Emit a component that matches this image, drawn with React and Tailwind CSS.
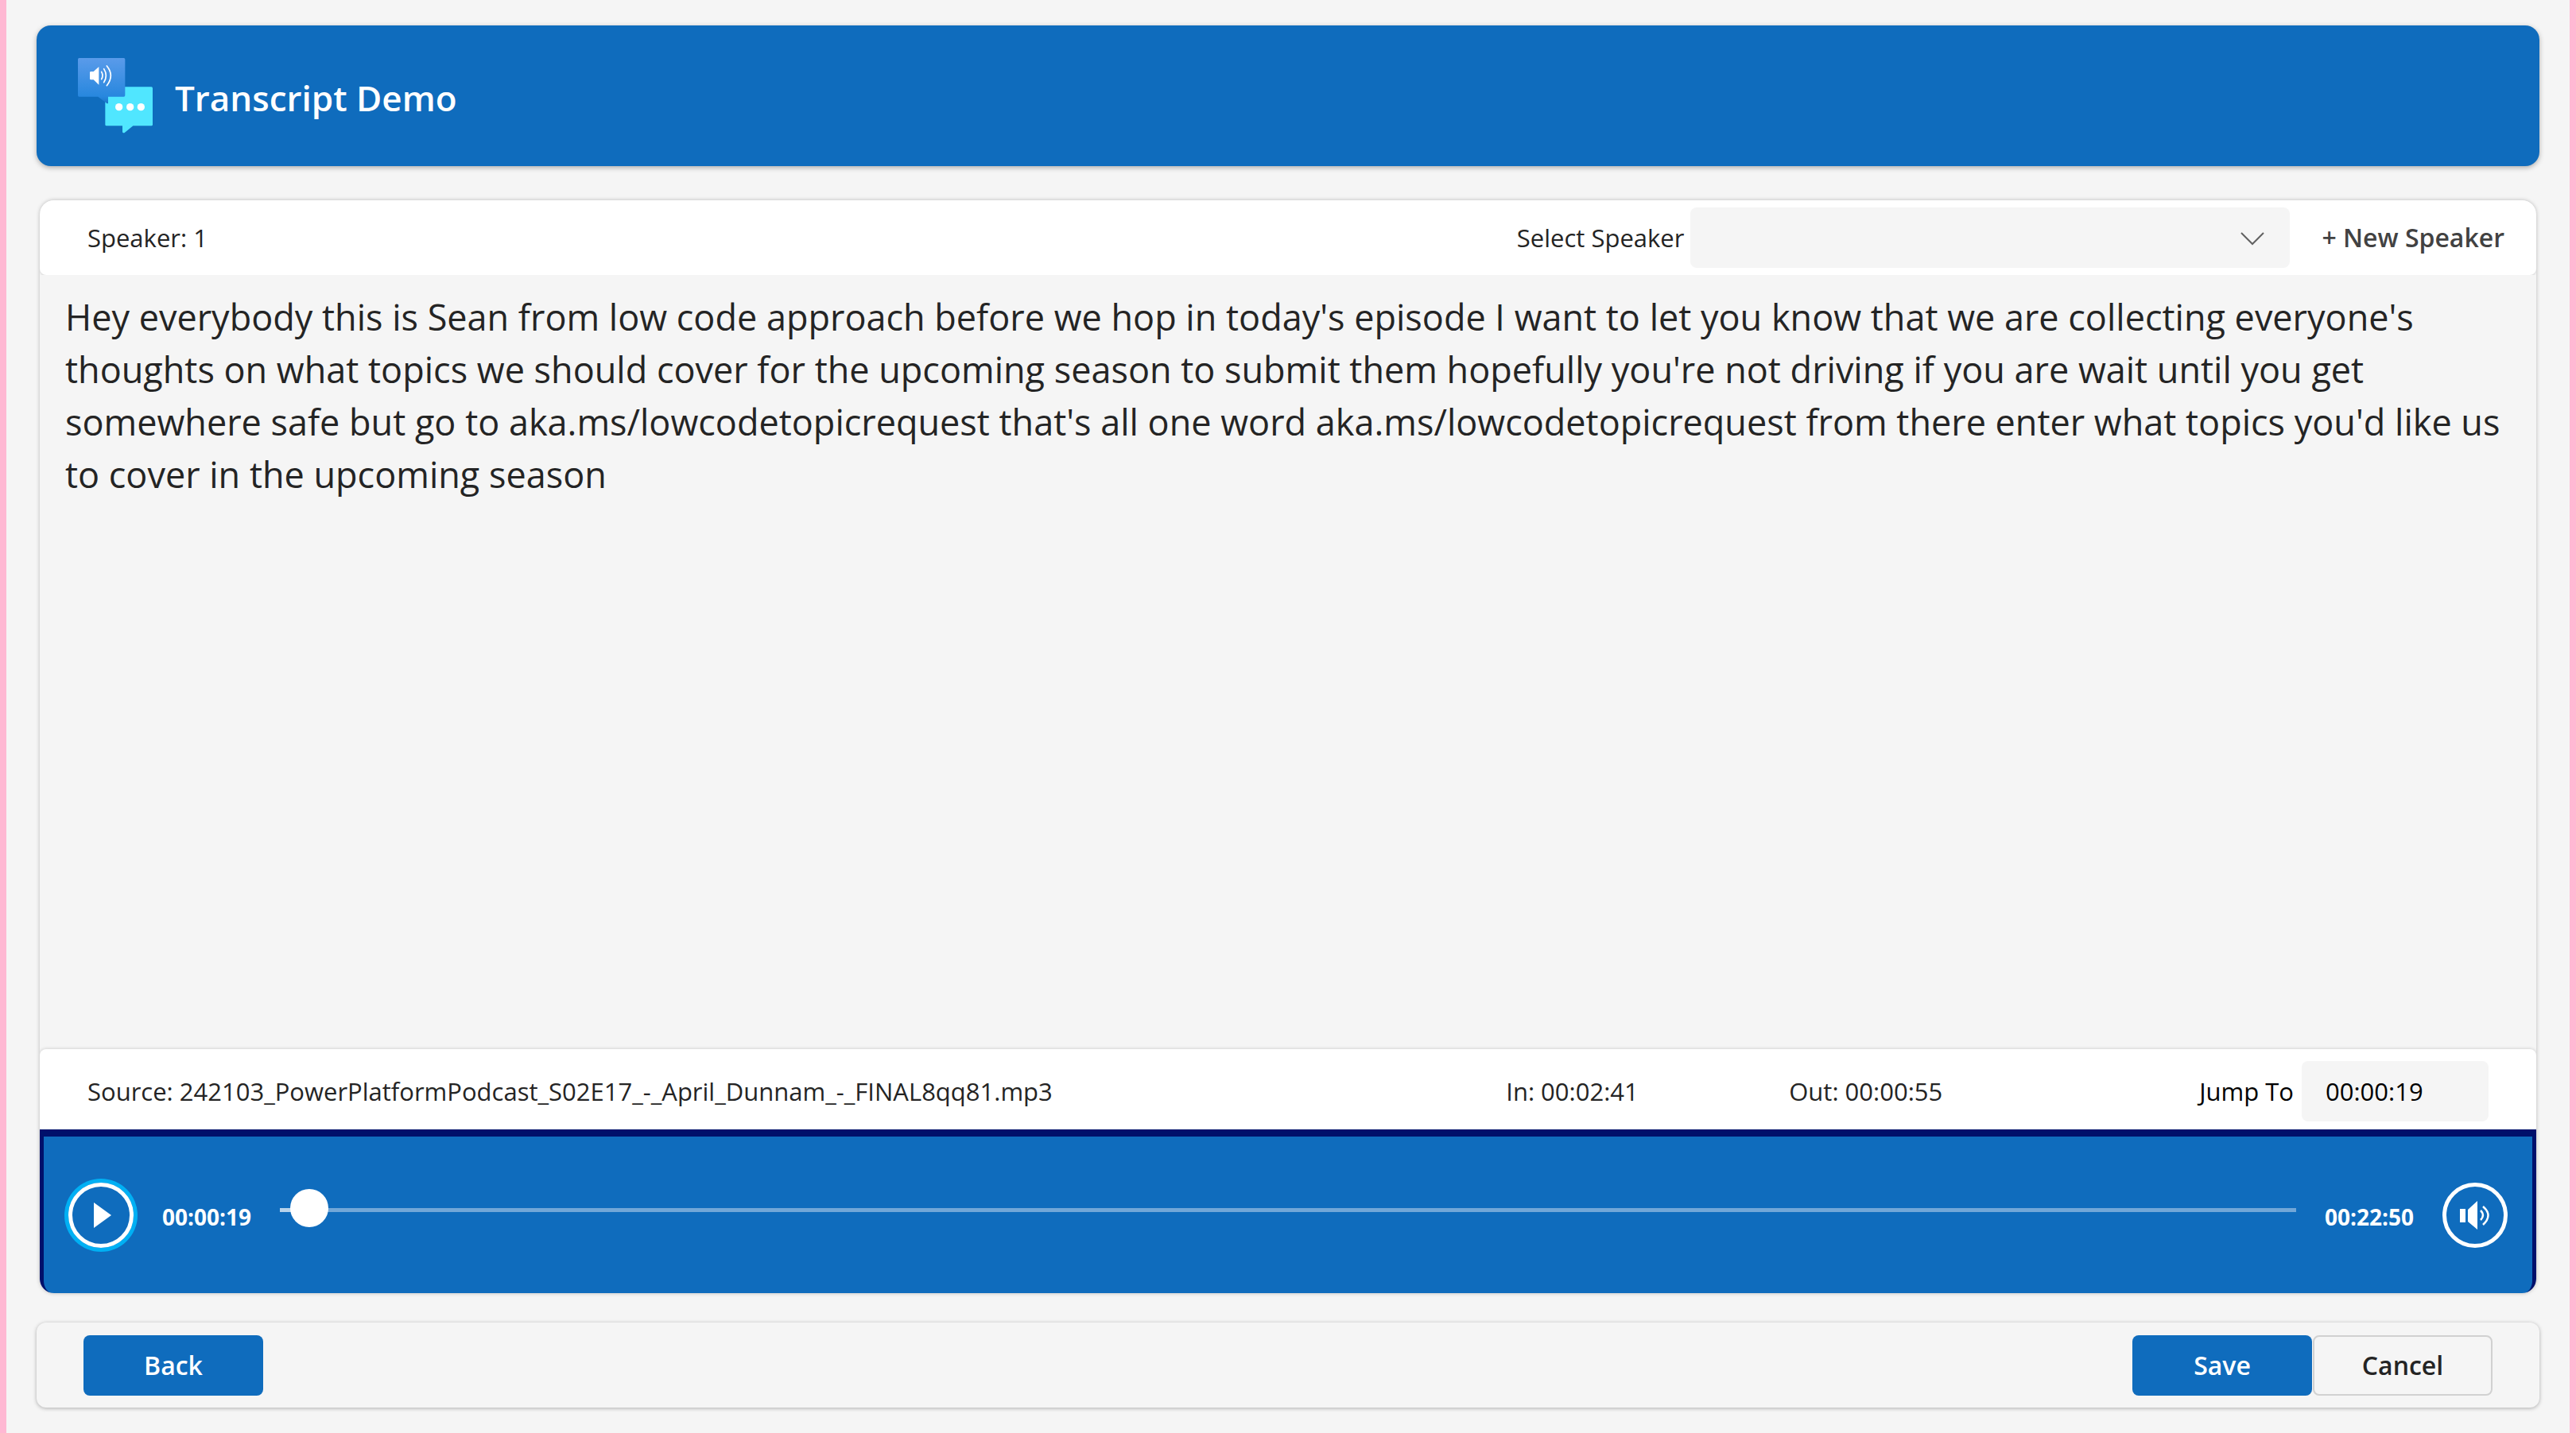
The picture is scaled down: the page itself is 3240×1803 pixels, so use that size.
import { useState } from "react";

const DURATION = 1370;

const TRANSCRIPT =
  "Hey everybody this is Sean from low code approach before we hop in today's episode I want to let you know that we are collecting everyone's thoughts on what topics we should cover for the upcoming season to submit them hopefully you're not driving if you are wait until you get somewhere safe but go to aka.ms/lowcodetopicrequest that's all one word aka.ms/lowcodetopicrequest from there enter what topics you'd like us to cover in the upcoming season";

function Logo() {
  return (
    <svg viewBox="54 41 282 285" className="h-[95px] w-[94px] shrink-0" aria-hidden="true">
      <defs>
        <linearGradient id="bubble" x1="0" y1="0" x2="0" y2="1">
          <stop offset="0" stopColor="#5a9bea" />
          <stop offset="0.85" stopColor="#2787de" />
          <stop offset="1" stopColor="#1a72c6" />
        </linearGradient>
      </defs>
      <path d="M162 150H331a5 5 0 0 1 5 5V292a5 5 0 0 1-5 5H262L230 323a5 5 0 0 1-8-3V297H162a5 5 0 0 1-5-5V155a5 5 0 0 1 5-5Z" fill="#50e6ff" />
      <path d="M59 41H227a5 5 0 0 1 5 5V182a5 5 0 0 1-5 5H168V209a3 3 0 0 1-5 3L130 187H59a5 5 0 0 1-5-5V46a5 5 0 0 1 5-5Z" fill="url(#bubble)" />
      <path d="M99 96a4 4 0 0 1 4-4H113L133 74V142L113 123H103a4 4 0 0 1-4-4Z" fill="#fff" />
      <path d="M143 93Q151 107 143 121M152 82Q168 107 152 133M163 71Q193 107 163 145" fill="none" stroke="#fff" strokeWidth="5" strokeLinecap="round" />
      <circle cx="209" cy="226" r="14" fill="#fff" />
      <circle cx="251" cy="226" r="14" fill="#fff" />
      <circle cx="292" cy="226" r="14" fill="#fff" />
    </svg>
  );
}

export default function App() {
  const [text, setText] = useState(TRANSCRIPT);
  const [jump, setJump] = useState("00:00:19");
  const [position, setPosition] = useState(7);

  return (
    <div className="flex min-h-screen flex-col border-x-8 border-[#ffb8d3] bg-[#f5f5f5] px-[38px] py-8 font-['Open_Sans','Noto_Sans',sans-serif] text-[31px] leading-[44px] text-[#242424]">
      <header className="flex h-[177px] shrink-0 items-center gap-7 rounded-[18px] bg-[#0f6cbd] px-[52px] text-white shadow-[0_2px_6px_rgba(0,0,0,0.3)]">
        <Logo />
        <h1 className="pt-1 text-[44px] leading-[66px] font-semibold">Transcript Demo</h1>
      </header>

      <main className="mx-1 mt-[43px] flex grow flex-col overflow-hidden rounded-[18px] shadow-[0_0_5px_rgba(0,0,0,0.25)]">
        <div className="flex h-[94px] shrink-0 items-center rounded-b-lg bg-white pr-[40px] pl-[60px] shadow-[0_1px_3px_rgba(0,0,0,0.15)]">
          <span className="grow">Speaker: 1</span>
          <label htmlFor="speaker" className="mr-2">Select Speaker</label>
          <span className="relative block w-[754px]">
            <select id="speaker" defaultValue="" className="block h-[76px] w-full appearance-none rounded-lg bg-[#f5f5f5] px-7">
              <option value=""></option>
            </select>
            <svg viewBox="0 0 30 18" className="pointer-events-none absolute top-[31px] right-[32px] h-[18px] w-[30px]" aria-hidden="true">
              <path d="M1 1L15 15L29 1" fill="none" stroke="#616161" strokeWidth="2" />
            </svg>
          </span>
          <button type="button" className="ml-10 text-[32px] font-semibold text-[#424242]">+ New Speaker</button>
        </div>

        <textarea
          aria-label="Transcript"
          value={text}
          onChange={(e) => setText(e.target.value)}
          className="block w-full grow resize-none bg-[#f5f5f5] px-8 py-5 text-[45px] leading-[66px] outline-none"
        />

        <div className="flex h-[101px] shrink-0 items-center rounded-t-lg bg-white px-[60px] pt-1 shadow-[0_0_4px_rgba(0,0,0,0.2)]">
          <span className="grow">Source: 242103_PowerPlatformPodcast_S02E17_-_April_Dunnam_-_FINAL8qq81.mp3</span>
          <span className="w-[356px]">In: 00:02:41</span>
          <span className="w-[516px]">Out: 00:00:55</span>
          <label htmlFor="jump" className="mr-[10px] text-black">Jump To</label>
          <input id="jump" value={jump} onChange={(e) => setJump(e.target.value)} className="h-[76px] w-[235px] rounded-lg bg-[#f5f5f5] px-[30px] text-black" />
        </div>

        <div className="flex h-[206px] shrink-0 items-center rounded-b-[16px] border-x-[5px] border-t-[9px] border-[#00106b] bg-[#0f6cbd] px-[31px] text-[28px] leading-9 font-bold text-white">
          <button type="button" aria-label="Play" className="flex size-[82px] shrink-0 items-center justify-center rounded-full border-[5px] border-white ring-[5px] ring-[#00b0f4]">
            <svg viewBox="0 0 22 32" className="ml-1 h-8 w-[22px]" aria-hidden="true">
              <path d="M0 0L22 16L0 32Z" fill="currentColor" />
            </svg>
          </button>
          <span className="ml-9 pt-1">00:00:19</span>
          <input
            type="range"
            aria-label="Playback position"
            min="0"
            max={DURATION}
            value={position}
            onChange={(e) => setPosition(Number(e.target.value))}
            style={{ "--played": `${(position / DURATION) * 100 + 0.5}%` }}
            className="mx-9 mb-3 h-12 min-w-0 grow appearance-none bg-transparent [&::-webkit-slider-runnable-track]:h-[5px] [&::-webkit-slider-runnable-track]:bg-[linear-gradient(to_right,#b7d3eb_var(--played),#72a7d8_var(--played))] [&::-webkit-slider-thumb]:-mt-6 [&::-webkit-slider-thumb]:size-12 [&::-webkit-slider-thumb]:appearance-none [&::-webkit-slider-thumb]:rounded-full [&::-webkit-slider-thumb]:bg-white"
          />
          <span className="pt-1">00:22:50</span>
          <button type="button" aria-label="Mute" className="ml-9 flex size-[82px] shrink-0 items-center justify-center rounded-full border-[5px] border-white">
            <svg viewBox="0 0 38 36" className="h-9 w-[38px]" aria-hidden="true">
              <path d="M0 10H7V27H0ZM10 11L22 0V36L10 26Z" fill="currentColor" />
              <path d="M26 12Q32 18 26 24M29 7Q42 18 29 30" fill="none" stroke="currentColor" strokeWidth="2.5" />
            </svg>
          </button>
        </div>
      </main>

      <footer className="mt-[37px] flex h-[107px] shrink-0 items-center rounded-xl px-[59px] text-[32px] font-semibold shadow-[0_1px_5px_rgba(0,0,0,0.3)]">
        <button type="button" className="h-[76px] w-[226px] rounded-lg bg-[#0f6cbd] text-white">Back</button>
        <button type="button" className="ml-auto h-[76px] w-[226px] rounded-lg bg-[#0f6cbd] text-white">Save</button>
        <button type="button" className="ml-px h-[76px] w-[226px] rounded-lg border-2 border-[#d1d1d1]">Cancel</button>
      </footer>
    </div>
  );
}
